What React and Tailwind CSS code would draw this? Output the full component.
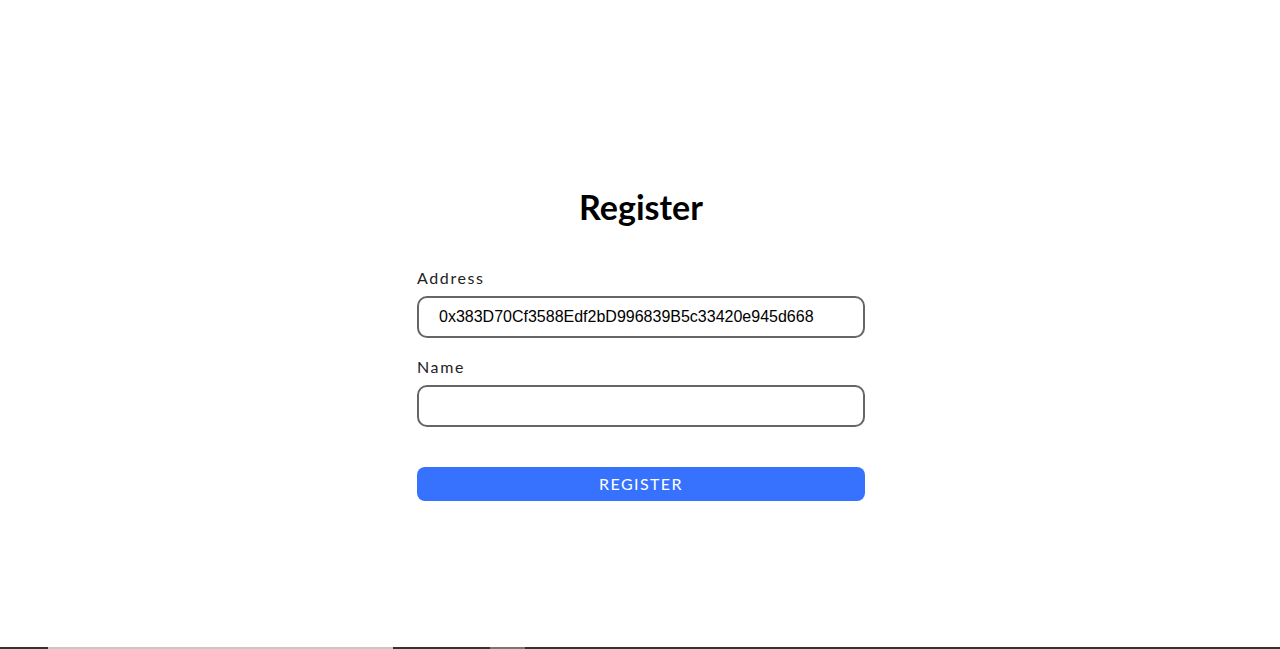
import { useState } from "react";

export default function App() {
  const [address, setAddress] = useState("0x383D70Cf3588Edf2bD996839B5c33420e945d668");
  const [name, setName] = useState("");

  return (
    <div className="min-h-[649px] flex flex-col bg-white" style={{ fontFamily: "Lato, 'Noto Sans', sans-serif" }}>
      <main className="flex-1 flex flex-col items-center pt-[187px]">
        <h1 className="text-[34px] leading-[40px] font-bold text-black ml-[2px]">Register</h1>

        <form className="w-[448px] ml-[2px] mt-[39px] flex flex-col" onSubmit={(e) => e.preventDefault()}>
          <label className="text-[16px] leading-6 tracking-[1.6px] text-[#222]">Address</label>
          <input
            value={address}
            onChange={(e) => setAddress(e.target.value)}
            className="mt-[6px] h-[42px] w-full rounded-[10px] border-2 border-[#666] px-[20px] text-[16px] text-black outline-none"
            style={{ fontFamily: "'Liberation Sans', Arial, sans-serif" }}
          />

          <label className="mt-[17px] text-[16px] leading-6 tracking-[1.6px] text-[#222]">Name</label>
          <input
            value={name}
            onChange={(e) => setName(e.target.value)}
            className="mt-[6px] h-[42px] w-full rounded-[10px] border-2 border-[#666] px-[20px] text-[16px] text-black outline-none"
            style={{ fontFamily: "'Liberation Sans', Arial, sans-serif" }}
          />

          <button
            type="submit"
            className="mt-[40px] h-[34px] w-full rounded-[8px] bg-[#3772ff] text-white text-[16px] tracking-[1.4px]"
          >
            REGISTER
          </button>
        </form>
      </main>

      {/* bottom strip */}
      <div className="h-[2px] flex">
        <div className="w-[48px] bg-[#333]" />
        <div className="w-[345px] bg-[#c8c8c8]" />
        <div className="w-[97px] bg-[#333]" />
        <div className="w-[35px] bg-[#777]" />
        <div className="flex-1 bg-[#333]" />
      </div>
    </div>
  );
}
